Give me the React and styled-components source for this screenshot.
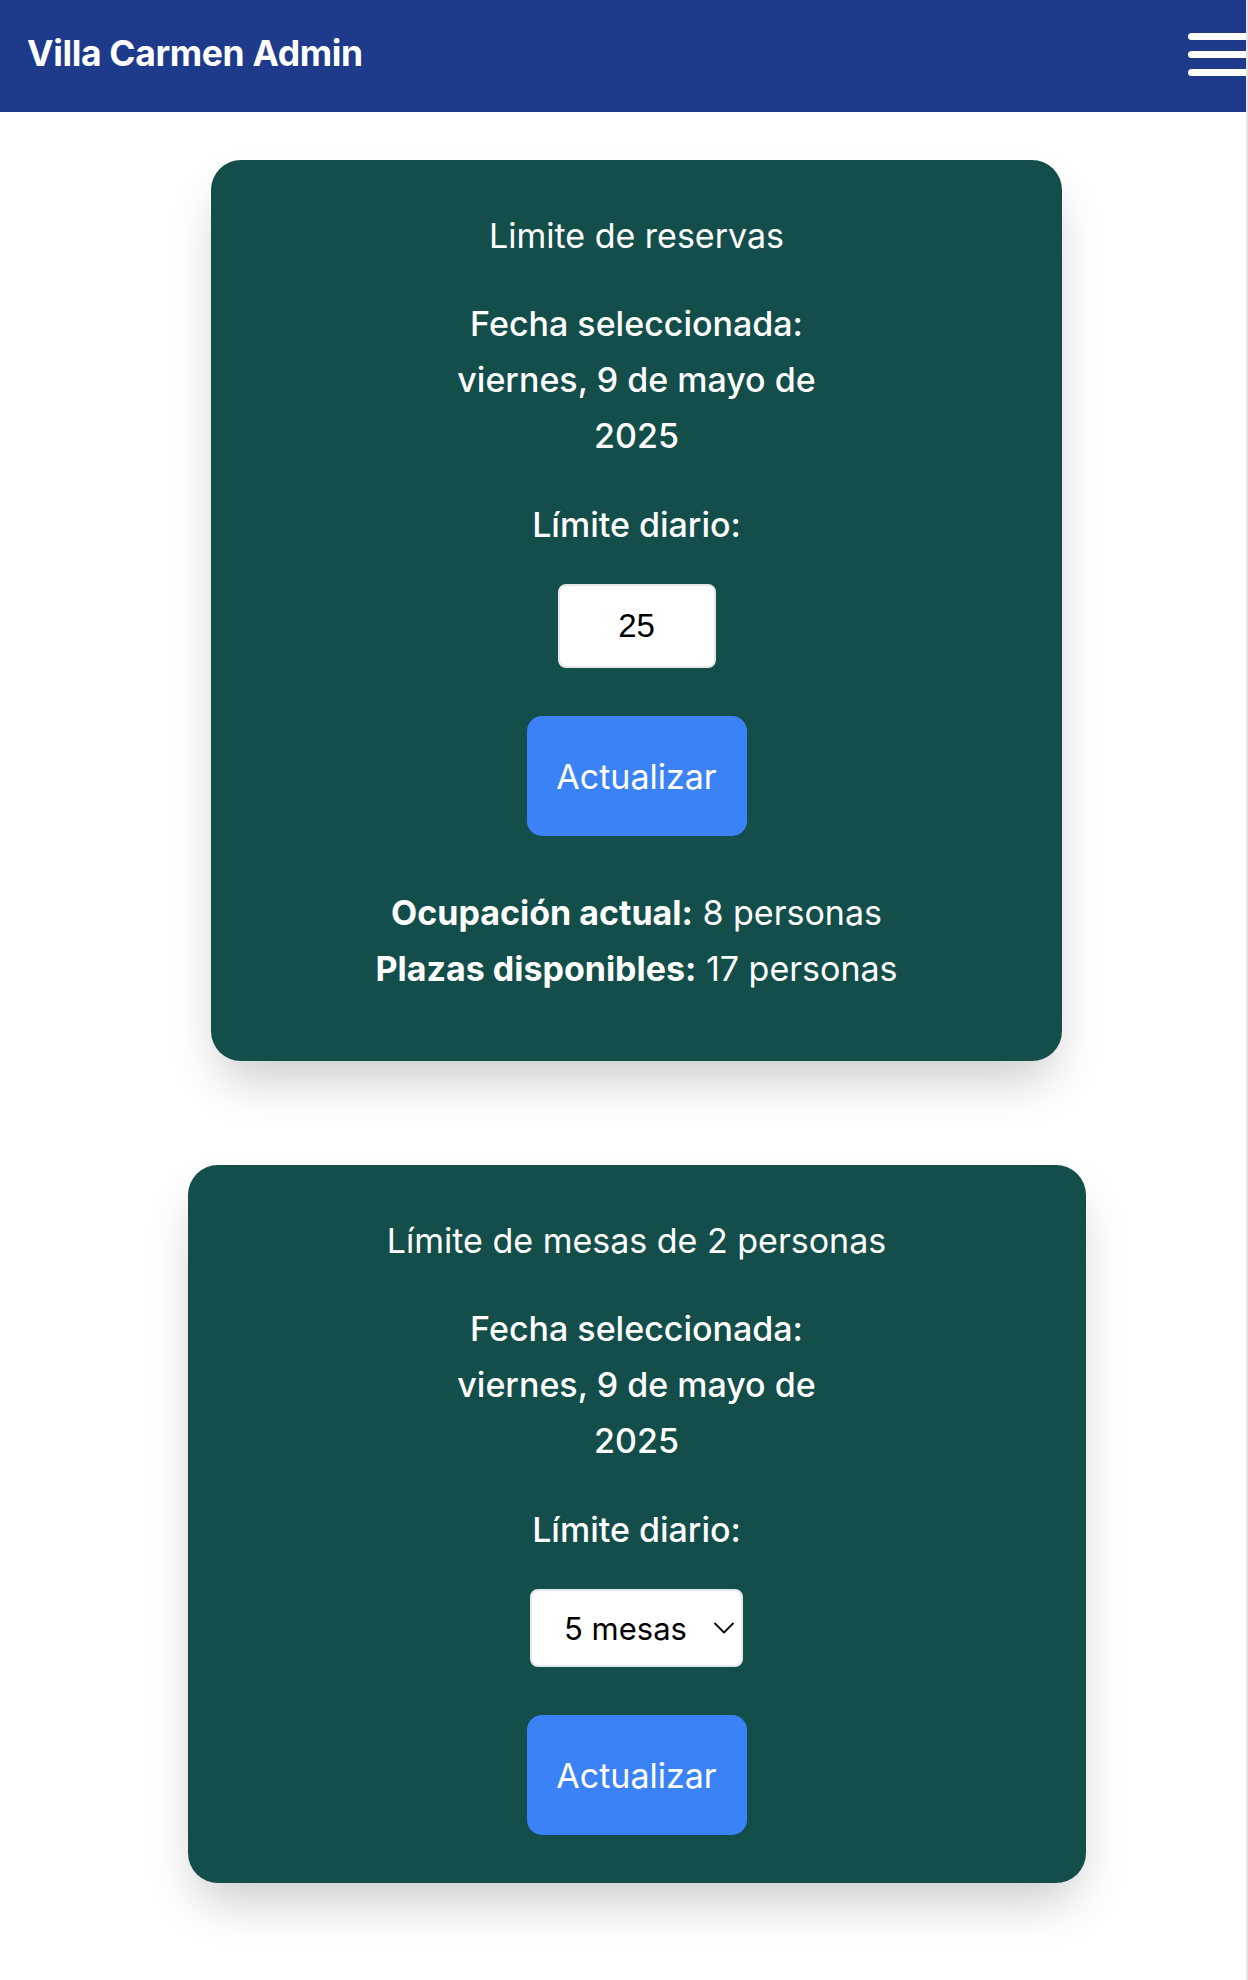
import React from 'react'
import styled, { createGlobalStyle } from 'styled-components'
import { ChevronDown } from 'lucide-react'

const GlobalStyle = createGlobalStyle`
  * { box-sizing: border-box; }
  body {
    margin: 0;
    background: #ffffff;
    font-family: Inter, "Noto Sans", sans-serif;
  }
`

const Page = styled.div`
  width: 1248px;
  min-height: 1980px;
  border-right: 2px solid #e3e3e3;
  overflow: hidden;
  background: #ffffff;
`

const Header = styled.header`
  height: 112px;
  background-color: #1e3a8a;
  display: flex;
  align-items: center;
  justify-content: space-between;
  padding-left: 27px;
`

const Brand = styled.h1`
  margin: 0 0 5px;
  color: white;
  font-size: 35.5px;
  font-weight: 700;
  letter-spacing: -0.01em;
`

const MenuBtn = styled.button`
  border: none;
  background: transparent;
  padding: 0;
  margin: 0 -14px 3px 0;
  width: 72px;
  height: 43px;
  display: flex;
  flex-direction: column;
  justify-content: space-between;
  cursor: pointer;

  & span {
    display: block;
    height: 7px;
    border-radius: 4px;
    background: white;
  }
`

const Main = styled.main`
  display: flex;
  flex-direction: column;
  align-items: center;
  gap: 104px;
  padding: 48px 0 80px 27px;
`

const Card = styled.section`
  width: ${p => p.$width}px;
  background-color: #134e4a;
  color: white;
  border-radius: 30px;
  box-shadow: 0 26px 50px -10px rgba(0, 0, 0, 0.22);
  padding: 48px 0 48px;
  display: flex;
  flex-direction: column;
  align-items: center;
  text-align: center;
  font-size: 34px;
  line-height: 56px;
`

const Title = styled.h2`
  margin: 0 0 32px;
  font-size: 34px;
  font-weight: 400;
  line-height: 56px;
`

const DateText = styled.p`
  margin: 0 0 33px;
  font-weight: 500;
`

const Label = styled.label`
  display: block;
  margin-bottom: 31px;
  font-weight: 500;
`

const NumberInput = styled.input`
  width: 158px;
  height: 84px;
  margin-bottom: 48px;
  border: 2px solid #e5e7eb;
  border-radius: 8px;
  background: white;
  color: #000;
  text-align: center;
  font-family: "Liberation Sans", Arial, sans-serif;
  font-size: 33px;
  outline: none;
`

const SelectWrap = styled.div`
  position: relative;
  width: 213px;
  height: 78px;
  margin-bottom: 48px;

  & svg {
    position: absolute;
    right: 1px;
    top: 21px;
    pointer-events: none;
    color: #111;
  }
`

const Select = styled.select`
  appearance: none;
  width: 100%;
  height: 100%;
  border: 2px solid #e5e7eb;
  border-radius: 8px;
  background: white;
  color: #000;
  padding-left: 32px;
  font-family: Inter, "Noto Sans", sans-serif;
  font-size: 31px;
  outline: none;
`

const Button = styled.button`
  width: 220px;
  height: 120px;
  border: none;
  border-radius: 15px;
  background-color: #3b82f6;
  color: white;
  font-family: Inter, "Noto Sans", sans-serif;
  font-size: 34px;
  cursor: pointer;
`

const Stats = styled.div`
  margin-top: 49px;
  margin-bottom: 16px;

  & p {
    margin: 0;
  }
  & strong {
    font-weight: 700;
  }
`

export default function App() {
  const [limit, setLimit] = React.useState('25')
  const [mesas, setMesas] = React.useState('5')

  return (
    <>
      <GlobalStyle />
      <Page>
        <Header>
          <Brand>Villa Carmen Admin</Brand>
          <MenuBtn aria-label="Menú">
            <span />
            <span />
            <span />
          </MenuBtn>
        </Header>
        <Main>
          <Card $width={851}>
            <Title>Limite de reservas</Title>
            <DateText>
              Fecha seleccionada:
              <br />
              viernes, 9 de mayo de
              <br />
              2025
            </DateText>
            <Label htmlFor="limite">Límite diario:</Label>
            <NumberInput
              id="limite"
              type="text"
              value={limit}
              onChange={e => setLimit(e.target.value)}
            />
            <Button>Actualizar</Button>
            <Stats>
              <p><strong>Ocupación actual:</strong> 8 personas</p>
              <p><strong>Plazas disponibles:</strong> 17 personas</p>
            </Stats>
          </Card>

          <Card $width={898}>
            <Title>Límite de mesas de 2 personas</Title>
            <DateText>
              Fecha seleccionada:
              <br />
              viernes, 9 de mayo de
              <br />
              2025
            </DateText>
            <Label htmlFor="mesas">Límite diario:</Label>
            <SelectWrap>
              <Select id="mesas" value={mesas} onChange={e => setMesas(e.target.value)}>
                {[1, 2, 3, 4, 5, 6, 7, 8, 9, 10].map(n => (
                  <option key={n} value={n}>{n} mesas</option>
                ))}
              </Select>
              <ChevronDown size={36} strokeWidth={1.3} />
            </SelectWrap>
            <Button>Actualizar</Button>
          </Card>
        </Main>
      </Page>
    </>
  )
}
